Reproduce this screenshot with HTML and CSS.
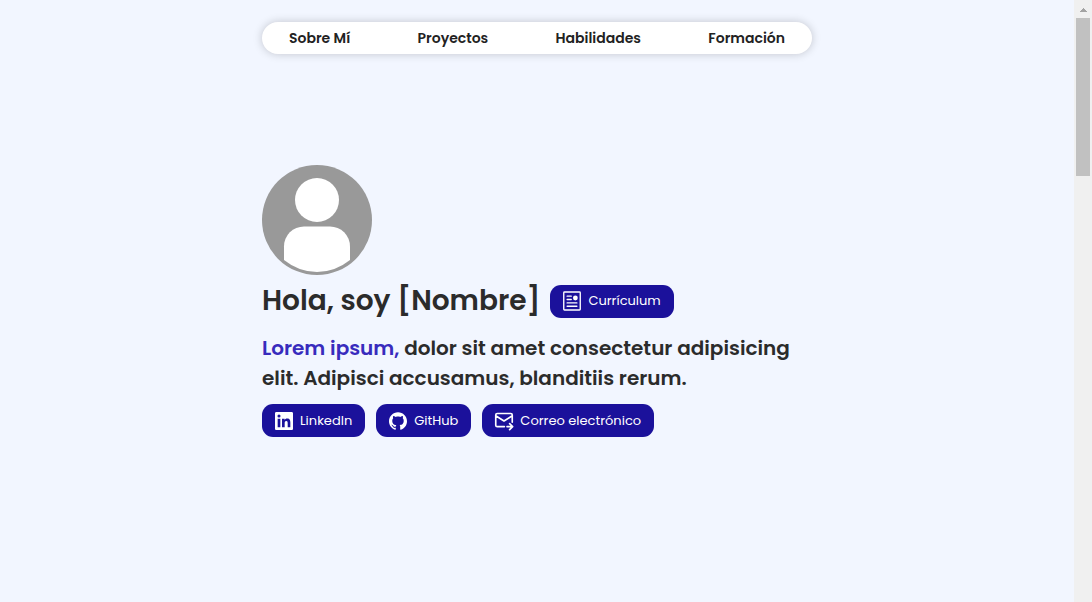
FILE: index.html
```html
<!DOCTYPE html>
<html lang="es">
<head>
<meta charset="utf-8">
<meta name="viewport" content="width=device-width, initial-scale=1">
<title>Portafolio</title>
<link rel="stylesheet" href="styles.css">
</head>
<body>
<div class="page">
  <header class="header">
    <nav class="nav">
      <a href="#sobre-mi">Sobre Mí</a>
      <a href="#proyectos">Proyectos</a>
      <a href="#habilidades">Habilidades</a>
      <a href="#formacion">Formación</a>
    </nav>
  </header>
  <main class="hero" id="sobre-mi">
    <svg class="avatar" viewBox="0 0 110 110" role="img" aria-label="Foto de perfil">
      <circle cx="55" cy="55" r="55" fill="#999"/>
      <circle cx="55" cy="35" r="22" fill="#fff"/>
      <path fill="#fff" d="M22 95V81.500A20 20 0 0 1 42 61.500H68A20 20 0 0 1 88 81.500V95Q73 107 55 107T22 95Z"/>
    </svg>
    <div class="title-row">
      <h1 class="title">Hola, soy [Nombre]</h1>
      <a class="button" href="#cv">
        <svg class="icon" viewBox="0 0 24 24" fill="none" stroke="currentColor" stroke-width="1.800" stroke-linecap="round" aria-hidden="true">
          <rect x="1" y="0" width="22" height="24" rx="1"/>
          <path d="M5.500 5.500H11M5.500 10H11M5.500 14.500H18.500M5.500 19H18.500"/>
          <circle cx="16.500" cy="8" r="3.200" fill="currentColor" stroke="none"/>
        </svg>
        Currículum
      </a>
    </div>
    <h2 class="subtitle"><span class="accent">Lorem ipsum,</span> dolor sit amet consectetur adipisicing elit. Adipisci accusamus, blanditiis rerum.</h2>
    <div class="links">
      <a class="button" href="#linkedin">
        <svg class="icon" viewBox="0 0 24 24" fill="currentColor" aria-hidden="true">
          <path d="M20.447 20.452h-3.554v-5.569c0-1.328-.027-3.037-1.852-3.037-1.853 0-2.136 1.445-2.136 2.939v5.667H9.351V9h3.414v1.561h.046c.477-.9 1.637-1.850 3.370-1.850 3.601 0 4.267 2.370 4.267 5.455v6.286zM5.337 7.433a2.062 2.062 0 1 1 0-4.125 2.062 2.062 0 0 1 0 4.125zM7.119 20.452H3.555V9h3.564v11.452zM22.225 0H1.771C.792 0 0 .774 0 1.729v20.542C0 23.227.792 24 1.771 24h20.451C23.200 24 24 23.227 24 22.271V1.729C24 .774 23.200 0 22.222 0z"/>
        </svg>
        LinkedIn
      </a>
      <a class="button" href="#github">
        <svg class="icon" viewBox="0 0 24 24" fill="currentColor" aria-hidden="true">
          <path d="M12 .297c-6.630 0-12 5.373-12 12 0 5.303 3.438 9.800 8.205 11.385.6.113.820-.258.820-.577 0-.285-.010-1.040-.015-2.040-3.338.724-4.042-1.610-4.042-1.610C4.422 18.070 3.633 17.700 3.633 17.700c-1.087-.744.084-.729.084-.729 1.205.084 1.838 1.236 1.838 1.236 1.070 1.835 2.809 1.305 3.495.998.108-.776.417-1.305.760-1.605-2.665-.3-5.466-1.332-5.466-5.930 0-1.310.465-2.380 1.235-3.220-.135-.303-.540-1.523.105-3.176 0 0 1.005-.322 3.300 1.230.960-.267 1.980-.399 3-.405 1.020.006 2.040.138 3 .405 2.280-1.552 3.285-1.230 3.285-1.230.645 1.653.240 2.873.120 3.176.765.840 1.230 1.910 1.230 3.220 0 4.610-2.805 5.625-5.475 5.920.420.360.810 1.096.810 2.220 0 1.606-.015 2.896-.015 3.286 0 .315.210.690.825.570C20.565 22.092 24 17.592 24 12.297c0-6.627-5.373-12-12-12"/>
        </svg>
        GitHub
      </a>
      <a class="button" href="#correo">
        <svg class="icon" viewBox="0 0 24 24" fill="none" stroke="currentColor" stroke-width="2.200" stroke-linecap="round" stroke-linejoin="round" aria-hidden="true">
          <path d="M12.500 19.500H3Q1 19.500 1 17.500V4Q1 2 3 2H21Q23 2 23 4V13.500M1 5L12 12L23 5M16 19.500H23M19.500 15.500L23.500 19.500L19.500 23.500"/>
        </svg>
        Correo electrónico
      </a>
    </div>
  </main>
</div>
<div class="scroll-track" aria-hidden="true">
  <svg class="scroll-arrow" viewBox="0 0 8 4" shape-rendering="crispEdges"><path d="M0 4L4 0L8 4Z" fill="#a3a3a3"/></svg>
  <div class="scroll-thumb"></div>
</div>
</body>
</html>
```
FILE: styles.css
```css
* {
  box-sizing: border-box;
}

body {
  margin: 0;
  min-height: 100vh;
  display: grid;
  grid-template-columns: 1fr 18px;
  background: #f2f6ff;
  color: #2b2b2b;
  font-family: Poppins, Inter, "Open Sans", sans-serif;
}

a {
  color: inherit;
  text-decoration: none;
}

.page {
  padding: 22px 16px;
}

.header,
.hero {
  max-width: 550px;
  margin: 0 auto;
}

.nav {
  display: flex;
  justify-content: space-between;
  padding: 0 27px;
  border-radius: 16px;
  background: #fff;
  box-shadow: 0 0 10px rgba(0, 0, 0, 0.2);
  color: #222;
  font-size: 14px;
  font-weight: 600;
  line-height: 32px;
}

.hero {
  padding-top: 111px;
}

.avatar {
  display: block;
  width: 110px;
  height: 110px;
}

.title-row {
  display: flex;
  flex-wrap: wrap;
  align-items: center;
  gap: 10px;
  margin-top: 5px;
}

.title {
  margin: 0;
  font-size: 28px;
  font-weight: 600;
  line-height: 42px;
}

.subtitle {
  margin: 11px 0;
  font-size: 20px;
  font-weight: 600;
  line-height: 30px;
}

.accent {
  color: #382bbd;
}

.links {
  display: flex;
  flex-wrap: wrap;
  gap: 11px;
}

.button {
  display: inline-flex;
  align-items: center;
  gap: 7px;
  height: 33px;
  padding: 0 13px;
  border-radius: 11px;
  background: #1b119b;
  color: #fff;
  font-size: 13px;
  white-space: nowrap;
}

.icon {
  flex: none;
  width: 18px;
  height: 18px;
  overflow: visible;
}

.scroll-track {
  display: flex;
  flex-direction: column;
  align-items: center;
  gap: 6px;
  padding-top: 8px;
  background: #f0f0f0;
}

.scroll-arrow {
  width: 8px;
  height: 4px;
}

.scroll-thumb {
  width: 14px;
  height: 158px;
  background: #c1c1c1;
}
```
